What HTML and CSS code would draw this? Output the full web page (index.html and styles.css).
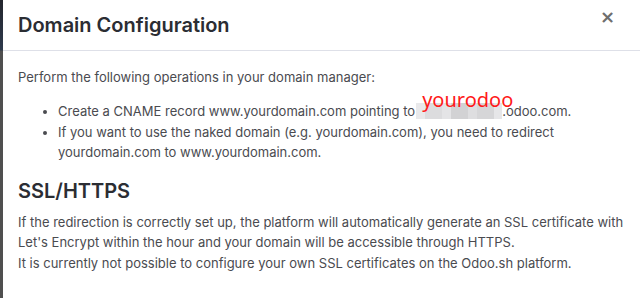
FILE: index.html
```html
<!DOCTYPE html>
<html lang="en">
<head>
    <title>Domain Configuration</title>
    <link rel="stylesheet" href="styles.css">
</head>
<body>
    <div class="page-wrap">
        <div class="backdrop-strip"></div>
        <div class="modal">
            <div class="modal-header">
                <h4 class="modal-title">Domain Configuration</h4>
                <button type="button" class="close-btn">&times;</button>
            </div>
            <div class="modal-body">
                <p>Perform the following operations in your domain manager:</p>
                <ul class="steps">
                    <li>Create a CNAME record www.yourdomain.com pointing to<span class="masked"><span class="masked-label">yourodoo</span></span>.odoo.com.</li>
                    <li>If you want to use the naked domain (e.g. yourdomain.com), you need to redirect yourdomain.com to www.yourdomain.com.</li>
                </ul>
                <h3 class="section-title">SSL/HTTPS</h3>
                <p>If the redirection is correctly set up, the platform will automatically generate an SSL certificate with Let's Encrypt within the hour and your domain will be accessible through HTTPS.<br>It is currently not possible to configure your own SSL certificates on the Odoo.sh platform.</p>
            </div>
        </div>
    </div>
</body>
</html>
```

FILE: styles.css
```css
body {
    margin: 0;
    padding: 0;
    font-family: Inter, 'Noto Sans', sans-serif;
    background-color: white;
    overflow: hidden;
}
.page-wrap {
    display: flex;
    min-height: 298px;
}
/* dark page behind the dialog */
.backdrop-strip {
    width: 3px;
    flex-shrink: 0;
    background: linear-gradient(to bottom, #23252d 0, #2e3a4c 50px, #4f4f4f 51px, #4f4f4f 100%);
}
.modal {
    flex: 1;
    background-color: white;
}
.modal-header {
    height: 50px;
    display: flex;
    align-items: center;
    justify-content: space-between;
    padding: 0 15px;
    border-bottom: 1px solid #dee0e8;
}
.modal-title {
    margin: 0;
    font-size: 20px;
    font-weight: 600;
    color: #2b2d33;
}
.close-btn {
    align-self: flex-start;
    margin: 8px 10px 0 0;
    background: none;
    border: none;
    padding: 0;
    font-size: 18px;
    font-weight: 700;
    line-height: 1;
    color: #6e6e6e;
    font-family: 'DejaVu Sans', sans-serif;
}
.modal-body {
    padding: 16px 15px;
    font-size: 13px;
    line-height: 20.3px;
    color: #4a4b50;
}
.modal-body p {
    margin: 0;
}
.steps {
    margin: 14px 0 0;
    padding-left: 40px;
}
.section-title {
    margin: 17px 0 9px;
    font-size: 20px;
    line-height: 24px;
    font-weight: 600;
    color: #2b2d33;
}
/* blurred subdomain */
.masked {
    display: inline-block;
    position: relative;
    width: 86px;
    height: 16px;
    margin-left: 1px;
    vertical-align: -3px;
    background:
        linear-gradient(to right, #e9e9eb 0, #e9e9eb 9px, #dcdcde 9px, #dcdcde 26px, #e4e4e6 26px, #e4e4e6 35px, #d2d2d4 35px, #d2d2d4 52px, #dedee0 52px, #dedee0 61px, #d6d6d8 61px, #d6d6d8 78px, #e6e6e8 78px);
}
.masked-label {
    position: absolute;
    left: 6px;
    top: -15px;
    font-family: 'Noto Sans', sans-serif;
    font-size: 20px;
    line-height: 24px;
    color: #ff1a1a;
}
```
